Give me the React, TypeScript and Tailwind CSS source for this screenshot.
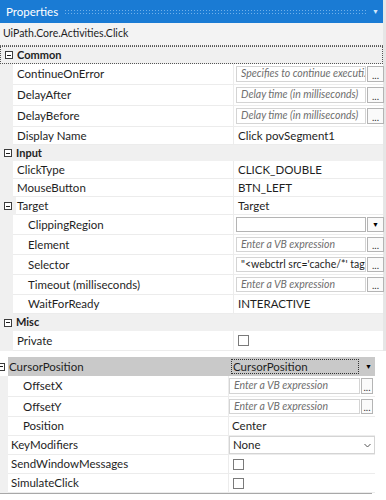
import React from 'react';

const font = "font-['Lato','Noto_Sans',sans-serif]";

function MinusBox() {
  return (
    <div className="relative w-[8px] h-[8px] border border-[#3c3c3c] bg-white flex items-center justify-center">
      <div className="w-[4px] h-px bg-[#1e1e1e]" />
    </div>
  );
}

function Dots() {
  return (
    <div className="flex-1 self-stretch h-full flex items-end justify-center pb-px">
      <span className="text-[10px] leading-none text-[#333]">...</span>
    </div>
  );
}

function ExprInput({ text, italic = true, wide = 'w-[130px]', btn = 'w-[17px]' }: { text: string; italic?: boolean; wide?: string; btn?: string }) {
  return (
    <div className="flex items-center gap-[1px] h-full py-[2px] text-[10.5px]">
      <div className={`${wide} h-full border border-[#d4d4d4] bg-white flex items-center pl-[4px] overflow-hidden whitespace-nowrap ${italic ? 'italic text-[#6e6e6e]' : 'text-[#1e1e1e]'}`}>
        {text}
      </div>
      <div className={`${btn} h-full border border-[#b4b4b4] bg-[#fafafa] flex`}>
        <Dots />
      </div>
    </div>
  );
}

type RowProps = {
  name: string;
  indent?: boolean;
  h: string;
  children?: React.ReactNode;
};

// top panel property row: gutter 13px, name col to x=233
function Row({ name, indent, h, children }: RowProps) {
  return (
    <div className={`flex ${h}`}>
      <div className="w-[13px] bg-[#f0f0f0]" />
      <div className={`w-[220px] flex items-center border-b border-[#ececec] ${indent ? 'pl-[15px]' : 'pl-[4px]'}`}>
        {name}
      </div>
      <div className="w-[150px] border-l border-b border-[#ececec] pl-[2px] flex items-center">
        {children}
      </div>
    </div>
  );
}

function Category({ name, h, focus }: { name: string; h: string; focus?: boolean }) {
  return (
    <div className={`flex items-center ${h} bg-[#f0f0f0] font-bold text-[11px] ${focus ? 'border border-dotted border-[#555]' : ''}`}>
      <div className="w-[16px] flex justify-center pr-[1px]">
        <MinusBox />
      </div>
      <span>{name}</span>
    </div>
  );
}

function Checkbox() {
  return <div className="w-[11px] h-[11px] border border-[#7a7a7a] bg-white" />;
}

// bottom panel row: gutter 8px, name col to x=228
function Row2({ name, indent, h, children }: RowProps) {
  return (
    <div className={`flex ${h}`}>
      <div className="w-[8px] bg-[#f0f0f0]" />
      <div className={`w-[220px] flex items-center border-b border-[#ececec] ${indent ? 'pl-[15px]' : 'pl-[3px]'}`}>
        {name}
      </div>
      <div className="flex-1 border-l border-b border-[#ececec] flex items-center">
        {children}
      </div>
    </div>
  );
}

export default function App() {
  return (
    <div className={`w-[386px] h-[500px] bg-white overflow-hidden text-[11.5px] text-[#1e1e1e] ${font}`}>
      {/* top panel */}
      <div className="border-r-[3px] border-[#e6e6e6]">
        <div className="h-[23px] bg-[#1a7bd4] flex items-center pl-[6px] pr-[4px] gap-[6px] text-white text-[11.5px]">
          <span>Properties</span>
          <div className="flex-1 h-[5px] bg-[radial-gradient(#6fb0ea_0.8px,transparent_1px)] bg-[length:3px_3px]" />
          <span className="text-[7px] text-[#d0e6fa]">▼</span>
        </div>
        <div className="h-[23px] bg-[#f3f3f3] flex items-center pl-[3px] border-b border-dotted border-[#666] text-[10.5px]">
          UiPath.Core.Activities.Click
        </div>
        <Category name="Common" h="h-[18px]" focus />
        <Row name="ContinueOnError" h="h-[21px]">
          <ExprInput text="Specifies to continue executi." />
        </Row>
        <Row name="DelayAfter" h="h-[21px]">
          <ExprInput text="Delay time (in milliseconds)" />
        </Row>
        <Row name="DelayBefore" h="h-[21px]">
          <ExprInput text="Delay time (in milliseconds)" />
        </Row>
        <Row name="Display Name" h="h-[18px]">
          <span className="pl-[2px]">Click povSegment1</span>
        </Row>
        <Category name="Input" h="h-[16px]" />
        <Row name="ClickType" h="h-[18px]">
          <span className="pl-[2px]">CLICK_DOUBLE</span>
        </Row>
        <Row name="MouseButton" h="h-[18px]">
          <span className="pl-[2px]">BTN_LEFT</span>
        </Row>
        <div className="flex h-[18px]">
          <div className="w-[16px] bg-[#f0f0f0] flex items-center justify-center pr-px">
            <MinusBox />
          </div>
          <div className="w-[217px] flex items-center border-b border-[#ececec] pl-px">Target</div>
          <div className="w-[150px] border-l border-b border-[#ececec] pl-[4px] flex items-center">Target</div>
        </div>
        <Row name="ClippingRegion" indent h="h-[20px]">
          <div className="flex items-center gap-[1px] h-full py-[2px]">
            <div className="w-[130px] h-full border border-[#b4b4b4] bg-white" />
            <div className="w-[17px] h-full border border-[#b4b4b4] bg-[#fafafa] flex items-center justify-center text-[7px] text-black">
              ▼
            </div>
          </div>
        </Row>
        <Row name="Element" indent h="h-[20px]">
          <ExprInput text="Enter a VB expression" />
        </Row>
        <Row name="Selector" indent h="h-[20px]">
          <ExprInput text={"\"<webctrl src='cache/*' tag:"} italic={false} />
        </Row>
        <Row name="Timeout (milliseconds)" indent h="h-[20px]">
          <ExprInput text="Enter a VB expression" />
        </Row>
        <Row name="WaitForReady" indent h="h-[19px]">
          <span className="pl-[2px]">INTERACTIVE</span>
        </Row>
        <Category name="Misc" h="h-[17px]" />
        <Row name="Private" h="h-[20px]">
          <div className="pl-[2px]">
            <Checkbox />
          </div>
        </Row>
      </div>

      {/* bottom panel */}
      <div className="w-[375px] mt-[6px]">
        <div className="flex h-[19px] items-center">
          <div className="w-[8px] flex items-center ml-[-3px] mr-[3px]">
            <MinusBox />
          </div>
          <div className="flex-1 h-full bg-[#c9c9c9] flex items-center">
            <div className="w-[220px] pl-[1px]">CursorPosition</div>
            <div className="flex-1 h-full flex items-center pl-[3px] pr-[3px]">
              <div className="w-[128px] h-[15px] border border-dotted border-[#333] flex items-center pl-px leading-none">
                CursorPosition
              </div>
              <span className="ml-auto text-[7px] text-black">▼</span>
            </div>
          </div>
        </div>
        <Row2 name="OffsetX" indent h="h-[21px]">
          <ExprInput text="Enter a VB expression" wide="w-[131px]" btn="w-[12px]" />
        </Row2>
        <Row2 name="OffsetY" indent h="h-[20px]">
          <ExprInput text="Enter a VB expression" wide="w-[131px]" btn="w-[12px]" />
        </Row2>
        <Row2 name="Position" indent h="h-[19px]">
          <span className="pl-[3px]">Center</span>
        </Row2>
        <Row2 name="KeyModifiers" h="h-[19px]">
          <div className="w-full h-full border border-[#d4d4d4] flex items-center pl-[3px] pr-[3px]">
            <span>None</span>
            <svg className="ml-auto" width="7" height="5" viewBox="0 0 7 5">
              <path d="M0.5 1 L3.5 4 L6.5 1" fill="none" stroke="#555" strokeWidth="1" />
            </svg>
          </div>
        </Row2>
        <Row2 name="SendWindowMessages" h="h-[19px]">
          <div className="pl-[4px]">
            <Checkbox />
          </div>
        </Row2>
        <Row2 name="SimulateClick" h="h-[19px]">
          <div className="pl-[4px]">
            <Checkbox />
          </div>
        </Row2>
        <div className="h-px bg-[#a8a8a8] w-[372px]" />
      </div>
    </div>
  );
}
